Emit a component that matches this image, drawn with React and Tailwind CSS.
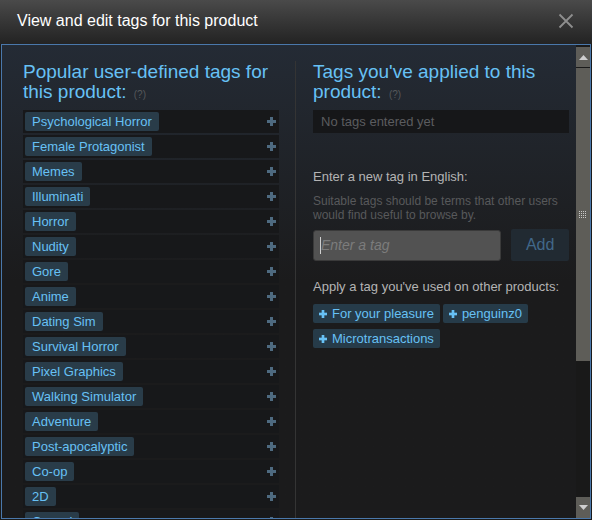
import React from "react";

const popularTags = [
  "Psychological Horror",
  "Female Protagonist",
  "Memes",
  "Illuminati",
  "Horror",
  "Nudity",
  "Gore",
  "Anime",
  "Dating Sim",
  "Survival Horror",
  "Pixel Graphics",
  "Walking Simulator",
  "Adventure",
  "Post-apocalyptic",
  "Co-op",
  "2D",
  "Casual",
];

const usedTags = ["For your pleasure", "penguinz0", "Microtransactions"];

function Plus({ color = "#4e6a80", size = 9 }) {
  return (
    <svg width={size} height={size} viewBox="0 0 9 9" className="shrink-0">
      <rect x="3" y="0" width="3" height="9" fill={color} />
      <rect x="0" y="3" width="9" height="3" fill={color} />
    </svg>
  );
}

function Heading({ children }) {
  return (
    <h2 className="text-[19px] leading-[20px] text-[#67c1f5] font-normal">
      {children}{" "}
      <span className="text-[10px] leading-none text-[#56585b] ml-[2px]">(?)</span>
    </h2>
  );
}

function Scrollbar() {
  return (
    <div className="w-[14px] flex flex-col pt-[2px]">
      <div className="h-[21px] bg-[#5e5d58] border-b border-[#1a1a1a] flex items-center justify-center">
        <svg width="9" height="5" viewBox="0 0 9 5">
          <polygon points="4.5,0 9,5 0,5" fill="#cfcfcf" />
        </svg>
      </div>
      <div className="h-[293px] bg-[#5e5d58] flex items-center justify-center">
        <svg width="8" height="8" viewBox="0 0 8 8">
          {[0, 2, 4, 6].map((y) =>
            [0, 2, 4, 6].map((x) => (
              <rect key={`${x}-${y}`} x={x} y={y} width="1" height="1" fill="#c9c9c9" />
            ))
          )}
        </svg>
      </div>
      <div className="flex-1 bg-[#191919]" />
      <div className="h-[21px] bg-[#5e5d58] flex items-center justify-center">
        <svg width="9" height="5" viewBox="0 0 9 5">
          <polygon points="0,0 9,0 4.5,5" fill="#cfcfcf" />
        </svg>
      </div>
    </div>
  );
}

export default function App() {
  return (
    <div
      className="w-[592px] h-[520px] bg-[#1a1a1a] flex flex-col overflow-hidden"
      style={{ fontFamily: '"Liberation Sans", Arial, sans-serif' }}
    >
      <div className="h-[44px] shrink-0 bg-linear-to-b from-[#4a4a4a] to-[#232323] flex items-center justify-between pl-[17px] pr-[18px] pb-[2px]">
        <span className="text-[16px] text-white">View and edit tags for this product</span>
        <svg width="16" height="16" viewBox="0 0 16 16">
          <path d="M1.5 1.5 L14.5 14.5 M14.5 1.5 L1.5 14.5" stroke="#8e8e8e" strokeWidth="1.8" />
        </svg>
      </div>

      <div className="flex-1 min-h-0 mx-[1px] mb-[1px] border border-[#4a78ab] flex overflow-hidden">
        <div className="flex-1 flex pl-[21px] pt-[17px] overflow-hidden bg-linear-to-b from-[#242b35] to-[#1b1b1c] to-[50%]">
          <div className="w-[256px] shrink-0">
            <Heading>
              Popular user-defined tags for this product:
            </Heading>
            <div className="mt-[8px] flex flex-col gap-[2px]">
              {popularTags.map((tag) => (
                <div
                  key={tag}
                  className="h-[23px] shrink-0 bg-[#17181a] flex items-center justify-between pl-[2px] pr-[3px]"
                >
                  <span className="h-[19px] px-[7px] rounded-[2px] bg-[#293c49] text-[#67c1f5] text-[13px] leading-[19px]">
                    {tag}
                  </span>
                  <Plus />
                </div>
              ))}
            </div>
          </div>

          <div className="ml-[16px] -mt-[1px] w-px bg-[#343434] shrink-0" />

          <div className="ml-[17px] w-[256px] shrink-0">
            <Heading>Tags you've applied to this product:</Heading>
            <div className="mt-[8px] h-[23px] bg-[#161719] px-[8px] text-[13px] leading-[23px] text-[#5b5c5f]">
              No tags entered yet
            </div>
            <div className="mt-[36px] text-[13px] leading-[16px] text-[#b4b4b4]">
              Enter a new tag in English:
            </div>
            <div className="mt-[9px] text-[12px] leading-[14px] text-[#58595b]">
              Suitable tags should be terms that other users would find useful to browse by.
            </div>
            <div className="mt-[8px] flex gap-[10px]">
              <div className="w-[189px] h-[31px] rounded-[3px] bg-[#525252] border border-[#3a3a3a] flex items-center pl-[6px]">
                <span className="w-px h-[17px] bg-[#d0d0d0]" />
                <span className="italic text-[14px] text-[#7c7c7c]">Enter a tag</span>
              </div>
              <div className="w-[58px] h-[32px] -mt-[1px] rounded-[2px] bg-[#212a32] flex items-center justify-center text-[16px] text-[#41688a]">
                Add
              </div>
            </div>
            <div className="mt-[18px] text-[13px] leading-[16px] text-[#b4b4b4]">
              Apply a tag you've used on other products:
            </div>
            <div className="mt-[9px] flex flex-wrap gap-x-[3px] gap-y-[6px]">
              {usedTags.map((tag) => (
                <div
                  key={tag}
                  className="h-[19px] rounded-[2px] bg-[#263b49] flex items-center gap-[5px] pl-[6px] pr-[6px]"
                >
                  <Plus color="#67c1f5" size={8} />
                  <span className="text-[13px] leading-[19px] text-[#67c1f5]">{tag}</span>
                </div>
              ))}
            </div>
          </div>
          <div className="w-[7px] shrink-0" />
        </div>
        <Scrollbar />
      </div>
    </div>
  );
}
